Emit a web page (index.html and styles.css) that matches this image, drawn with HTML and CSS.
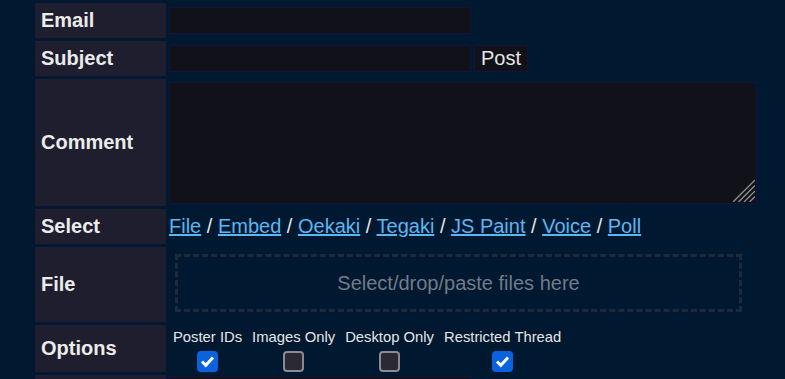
FILE: index.html
```html
<!DOCTYPE html>
<html>
<head>
<meta charset="utf-8">
<title>New Thread</title>
<link rel="stylesheet" href="styles.css">
</head>
<body>
<form class="postform">
  <table class="fields">
    <tr class="row-line">
      <th>Email</th>
      <td><input class="field" type="text" name="email"></td>
    </tr>
    <tr class="row-line">
      <th>Subject</th>
      <td>
        <div class="subject">
          <input class="field" type="text" name="subject">
          <button class="post" type="button">Post</button>
        </div>
      </td>
    </tr>
    <tr class="row-comment">
      <th>Comment</th>
      <td>
        <div class="comment">
          <textarea name="message"></textarea>
          <svg class="grip" width="22" height="22" viewBox="0 0 22 22">
            <path d="M0 22L22 0M5.5 22L22 5.5M11 22L22 11M16.5 22L22 16.5" stroke="#8c8c8c" stroke-width="1.4" fill="none"/>
          </svg>
        </div>
      </td>
    </tr>
    <tr class="row-line">
      <th>Select</th>
      <td class="modes">
        <a href="#">File</a> / <a href="#">Embed</a> / <a href="#">Oekaki</a> / <a href="#">Tegaki</a> / <a href="#">JS Paint</a> / <a href="#">Voice</a> / <a href="#">Poll</a>
      </td>
    </tr>
    <tr class="row-file">
      <th>File</th>
      <td><div class="drop">Select/drop/paste files here</div></td>
    </tr>
    <tr class="row-options">
      <th>Options</th>
      <td>
        <div class="options">
          <label class="opt">Poster IDs
            <span class="box on"><svg width="21" height="21" viewBox="0 0 21 21"><path d="M5 10.5L8.8 14.3L16 6.6" stroke="#fff" stroke-width="3" fill="none"/></svg></span>
          </label>
          <label class="opt">Images Only <span class="box"></span></label>
          <label class="opt">Desktop Only <span class="box"></span></label>
          <label class="opt">Restricted Thread
            <span class="box on"><svg width="21" height="21" viewBox="0 0 21 21"><path d="M5 10.5L8.8 14.3L16 6.6" stroke="#fff" stroke-width="3" fill="none"/></svg></span>
          </label>
        </div>
      </td>
    </tr>
    <tr class="row-line row-next">
      <th></th>
      <td><input class="field" type="password" name="postpassword"></td>
    </tr>
  </table>
</form>
</body>
</html>
```

FILE: styles.css
```css
html, body { margin:0; padding:0; background:#001830; font-family:"Liberation Sans", Arial, sans-serif; color:#e6e6e6; }
.postform { margin:0; }
.fields { border-spacing:3px; margin-left:32px; }
.fields th { width:125px; padding:0 0 0 6px; text-align:left; vertical-align:middle; background:#1e1e2e; color:#ebebeb; font-size:20px; font-weight:bold; }
.fields td { padding:0; vertical-align:middle; }
.row-line th, .row-line td { height:35px; }
.row-comment th, .row-comment td { height:127px; }
.row-file th, .row-file td { height:75px; }
.row-options th { height:47px; }
.row-next td { vertical-align:top; padding-top:1px; }

.field { display:block; box-sizing:border-box; width:302px; height:27px; margin:0; padding:0 4px; background:#111119; border:1px solid #13133c; color:#e6e6e6; font:20px "Liberation Sans", Arial, sans-serif; outline:none; }
.subject { display:flex; gap:3px; }
.post { box-sizing:border-box; width:54px; height:27px; margin:0; padding:0; background:#111119; border:1px solid #13133c; color:#e6e6e6; font:20px "Liberation Sans", Arial, sans-serif; }

.comment { position:relative; width:588px; }
.comment textarea { display:block; box-sizing:border-box; width:588px; height:122px; margin:0; padding:2px; background:#111119; border:1px solid #13133c; color:#e6e6e6; font:16px "Liberation Sans", Arial, sans-serif; resize:none; outline:none; }
.grip { position:absolute; right:2px; bottom:2px; }

.modes { font-size:20px; color:#e6e6e6; }
.modes a { color:#5cb6f2; text-decoration:underline; }

.drop { box-sizing:border-box; height:58px; width:567px; margin:7px 15px 10px 6px; border:3px dashed #1c2a3b; display:flex; align-items:center; justify-content:center; color:#727b87; font-size:20px; }

.row-options td { vertical-align:top; padding-top:4px; }
.options { display:flex; gap:10px; padding-left:4px; }
.opt { display:flex; flex-direction:column; align-items:center; font-size:14.8px; color:#e6e6e6; line-height:17px; }
.box { display:block; box-sizing:border-box; width:21px; height:21px; margin-top:5px; border:2px solid #8a8994; border-radius:4px; background:#2b2a33; }
.box.on { border:none; background:#0b62de; }
.box svg { display:block; }
```
